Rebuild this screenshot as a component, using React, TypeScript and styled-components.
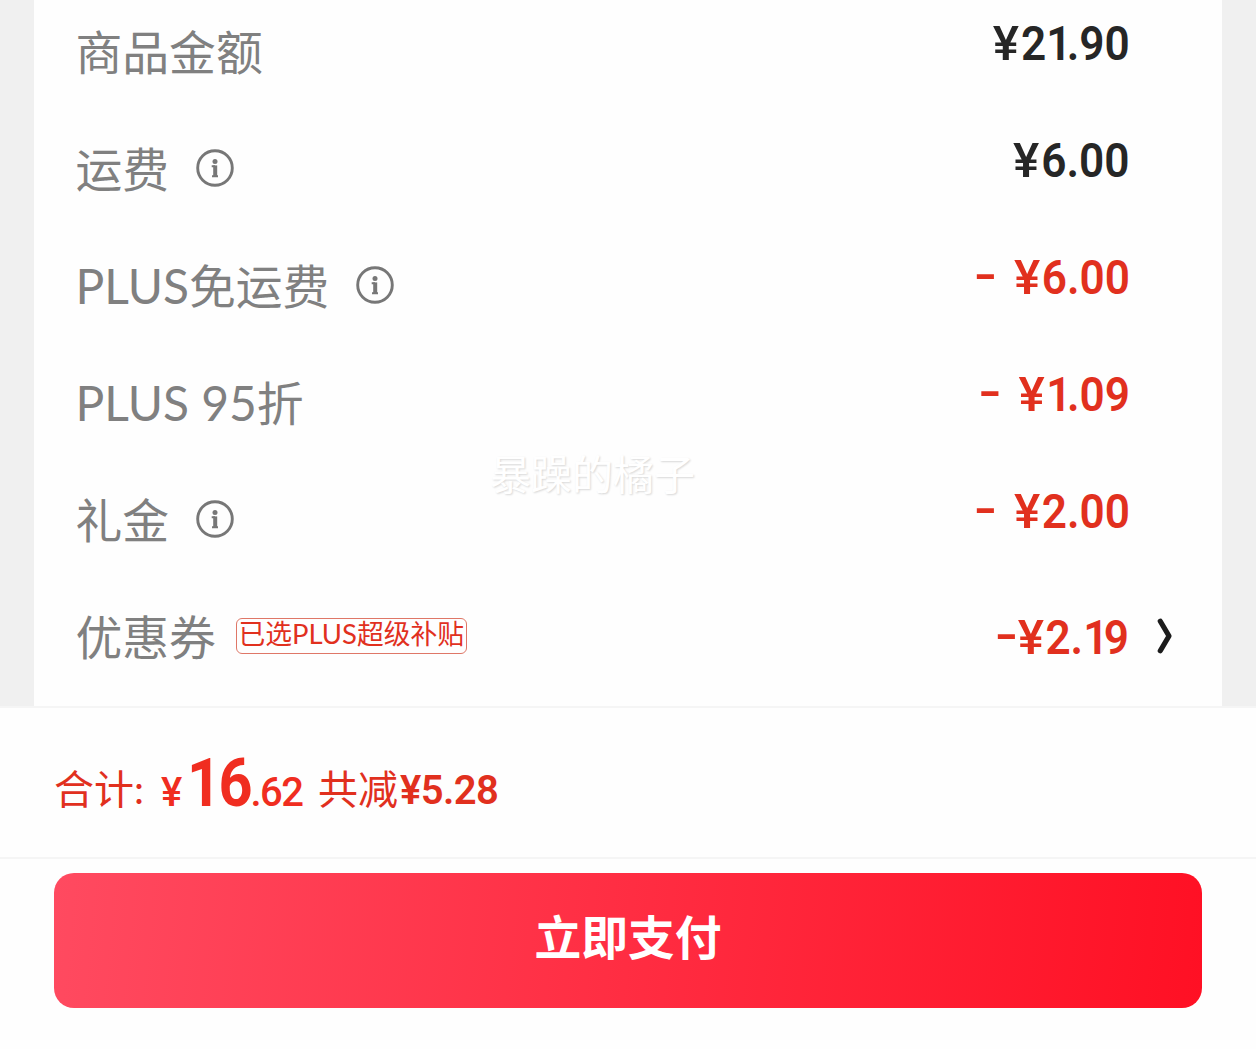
import styled, { createGlobalStyle } from "styled-components";

const COLORS = {
  BACKGROUND: "#f0f0f0",
  LINE: "#f5f5f5",
  LABEL: "#808080",
  TEXT: "#262626",
  RED: "#e1301e",
  TOTAL_RED: "#f02d20",
};

type FeeType = {
  label: string;
  price: string;
  discount?: boolean;
  info?: boolean;
  tag?: string;
  link?: boolean;
};

const FEES: FeeType[] = [
  { label: "商品金额", price: "¥21.90" },
  { label: "运费", price: "¥6.00", info: true },
  { label: "PLUS免运费", price: "- ¥6.00", info: true, discount: true },
  { label: "PLUS 95折", price: "- ¥1.09", discount: true },
  { label: "礼金", price: "- ¥2.00", info: true, discount: true },
  {
    label: "优惠券",
    price: "-¥2.19",
    tag: "已选PLUS超级补贴",
    discount: true,
    link: true,
  },
];

// latin letters are set a little larger than the chinese ones
function MixedText({ text }: { text: string }) {
  return (
    <span>
      {text
        .split(/([A-Z0-9 ]+)/)
        .map((part, i) => (i % 2 ? <Latin key={i}>{part}</Latin> : part))}
    </span>
  );
}

function Amount({ text }: { text: string }) {
  return (
    <>
      {text.split(/([-¥1])/).map((part, i) => {
        if (part === "-") return <Minus key={i}>-</Minus>;
        if (part === "¥") return <Yen key={i}>¥</Yen>;
        if (part === "1") return <One key={i}>1</One>;
        return part;
      })}
    </>
  );
}

function InfoIcon() {
  return (
    <StyledInfo viewBox="0 0 38 38" fill="none">
      <circle cx="19" cy="19" r="17.3" stroke="#777" strokeWidth="2.9" />
      <circle cx="19" cy="12.4" r="2.5" fill="#777" />
      <path d="M15.7 17.3H19M16 27.2H22" stroke="#777" strokeWidth="2" />
      <path d="M19.2 16.4V27.6" stroke="#777" strokeWidth="4" />
    </StyledInfo>
  );
}

function Fee({ data }: { data: FeeType }) {
  const { label, price, discount, info, tag, link } = data;

  return (
    <FeeRow>
      <Label>
        <MixedText text={label} />
        {info && <InfoIcon />}
        {tag && (
          <Tag>
            <MixedText text={tag} />
          </Tag>
        )}
      </Label>
      <Price $discount={discount} $centered={link}>
        <Amount text={price} />
      </Price>
      {link && (
        <Arrow viewBox="0 0 18 38" fill="none">
          <path
            d="M4.3 4.3L13 19L4.3 33.7"
            stroke="#1c1c1c"
            strokeWidth="5.2"
            strokeLinecap="round"
            strokeLinejoin="round"
          />
        </Arrow>
      )}
    </FeeRow>
  );
}

export default function App() {
  return (
    <Page>
      <GlobalStyle />
      <FeeSection>
        <FeeCard>
          {FEES.map((fee) => (
            <Fee key={fee.label} data={fee} />
          ))}
        </FeeCard>
        <Watermark>暴躁的橘子</Watermark>
      </FeeSection>

      <TotalBar>
        <TotalLabel>合计:</TotalLabel>
        <TotalPrice>
          <small>¥</small>
          <strong>16</strong>
          <small>.62</small>
        </TotalPrice>
        <Saved>
          共减<b>¥5.28</b>
        </Saved>
      </TotalBar>

      <Footer>
        <PayButton type="button">立即支付</PayButton>
      </Footer>
    </Page>
  );
}

const GlobalStyle = createGlobalStyle`
  * {
    box-sizing: border-box;
  }

  body {
    margin: 0;
    background: #fff;
    font-family: Lato, "Noto Sans CJK SC", sans-serif;
  }
`;

const Page = styled.main`
  width: 1256px;
  height: 1049px;
  overflow: hidden;
  background: #fefefe;
`;

const FeeSection = styled.section`
  position: relative;
  height: 708px;
  padding: 0 34px;
  border-bottom: 2px solid ${COLORS.LINE};
  background: ${COLORS.BACKGROUND};
`;

const FeeCard = styled.div`
  height: 706px;
  padding: 22px 48px 0 41.5px;
  display: flex;
  flex-direction: column;
  gap: 57px;
  background: #fefefe;
`;

const FeeRow = styled.div`
  height: 60px;
  padding-right: 44.5px;
  position: relative;
  display: flex;
  align-items: flex-start;
  justify-content: space-between;
`;

const Label = styled.div`
  display: flex;
  align-items: center;
  height: 60px;
  color: ${COLORS.LABEL};
  font-size: 46.8px;
  line-height: 60px;
  white-space: pre;
`;

const Latin = styled.span`
  font-size: 1.025em;
  line-height: 1;
`;

const StyledInfo = styled.svg`
  width: 38px;
  height: 38px;
  margin: 0 0 2px 27px;
`;

const Tag = styled.span`
  height: 36px;
  margin: 0 0 2px 20px;
  padding: 0 1.5px;
  border: 1px solid #df7767;
  border-radius: 6px;
  color: ${COLORS.RED};
  font-size: 26.8px;
  line-height: 31px;
`;

const Price = styled.span<{ $discount?: boolean; $centered?: boolean }>`
  height: ${({ $centered }) => ($centered ? 61 : 44)}px;
  color: ${({ $discount }) => ($discount ? COLORS.RED : COLORS.TEXT)};
  font-family: Roboto, sans-serif;
  font-size: 48px;
  font-weight: 600;
  line-height: ${({ $centered }) => ($centered ? 61 : 44)}px;
  white-space: pre;
  word-spacing: 7px;
  transform: scaleX(0.92);
  transform-origin: right;
`;

const Minus = styled.span`
  display: inline-block;
  margin-right: 3px;
  transform: translate(1px, -2px) scale(1.45, 0.95);
  transform-origin: 100% 60%;
`;

const Yen = styled.span`
  display: inline-block;
  margin-right: 2px;
  font-weight: 500;
  transform: scaleX(1.12);
  transform-origin: right;
`;

const One = styled.span`
  letter-spacing: -5px;
`;

const Arrow = styled.svg`
  position: absolute;
  top: 10px;
  right: 0;
  width: 18px;
  height: 38px;
`;

const Watermark = styled.span`
  position: absolute;
  top: 445px;
  left: 490px;
  color: #fff;
  font-size: 41px;
  line-height: 60px;
  text-shadow: 1px 1px 2px #d8d8d8;
`;

const TotalBar = styled.section`
  height: 151px;
  padding: 41px 54px 0;
  display: flex;
  align-items: baseline;
  border-bottom: 2px solid ${COLORS.LINE};
  color: ${COLORS.RED};
  font-size: 40px;
  line-height: 80px;
`;

const TotalLabel = styled.span`
  width: 107px;
`;

const TotalPrice = styled.span`
  width: 157px;
  color: ${COLORS.TOTAL_RED};
  font-family: Roboto, sans-serif;
  white-space: nowrap;

  small {
    font-size: 40px;
    font-weight: 500;
    line-height: 1;
    letter-spacing: -1.5px;
    vertical-align: -2px;
  }

  strong {
    display: inline-block;
    margin: 0 -6px 0 6px;
    font-size: 66px;
    font-weight: 700;
    line-height: 1;
    letter-spacing: -3px;
    vertical-align: -2px;
    transform: scaleX(0.9);
    transform-origin: left;
  }
`;

const Saved = styled.span`
  b {
    margin-left: 2px;
    font-family: Roboto, sans-serif;
    font-weight: 600;
    line-height: 1;
    letter-spacing: -0.6px;
  }
`;

const Footer = styled.footer`
  padding: 14px 54px 0;
`;

const PayButton = styled.button`
  display: block;
  width: 100%;
  height: 135px;
  padding: 0 0 12px;
  border: 0;
  border-radius: 20px;
  background: linear-gradient(95deg, #ff4a60, #ff2d42 50%, #ff1024);
  color: #fff;
  font-family: "Noto Sans CJK SC", sans-serif;
  font-size: 46.8px;
  font-weight: 700;
`;
